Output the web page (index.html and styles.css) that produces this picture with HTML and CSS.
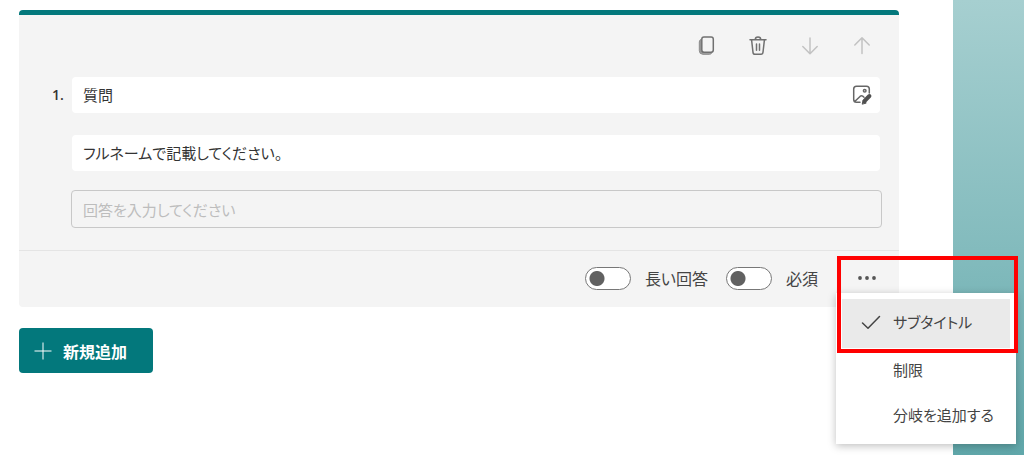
FILE: index.html
```html
<!DOCTYPE html>
<html lang="ja">

<head>
  <meta charset="utf-8">
  <meta name="viewport" content="width=device-width, initial-scale=1">
  <title>フォーム</title>
  <link rel="stylesheet" href="styles.css">
</head>

<body>

  <main class="form-page">

    <section class="question-card">

      <div class="question-body">
        <div class="toolbar">
          <button class="icon-button" type="button" aria-label="コピー">
            <svg width="22" height="22" viewBox="0 0 22 22" fill="none" stroke="#707070" stroke-width="1.5">
              <path d="M6 4.5Q4.300 5 4.300 7V15.500Q4.300 19.300 8 19.300H14.500Q16.300 19.300 17 17.500H8Q6 17.500 6 15.500Z" fill="#a0a0a0" stroke="#8a8a8a" stroke-width="1"/>
              <rect x="6.800" y="2" width="11.500" height="15.300" rx="2.200" fill="#f4f4f4"/>
            </svg>
          </button>
          <button class="icon-button" type="button" aria-label="削除">
            <svg width="22" height="22" viewBox="0 0 22 22" fill="none" stroke="#707070" stroke-width="1.500" stroke-linecap="round" stroke-linejoin="round">
              <path d="M3 4.800H19M4.600 5L6 17.300Q6.200 19.300 8 19.300H14Q15.800 19.300 16 17.300L17.400 5M8.300 4.500Q8.300 2 11 2Q13.700 2 13.700 4.500M9.500 9V15.300M12.500 9V15.300"/>
            </svg>
          </button>
          <button class="icon-button" type="button" aria-label="下へ移動" disabled>
            <svg width="22" height="22" viewBox="0 0 22 22" fill="none" stroke="#c2c2c2" stroke-width="1.500" stroke-linecap="round" stroke-linejoin="round">
              <path d="M11 3V18.500M3.800 11.500L11 18.700L18.200 11.500"/>
            </svg>
          </button>
          <button class="icon-button" type="button" aria-label="上へ移動" disabled>
            <svg width="22" height="22" viewBox="0 0 22 22" fill="none" stroke="#c2c2c2" stroke-width="1.500" stroke-linecap="round" stroke-linejoin="round">
              <path d="M11 18.500V3M3.800 10L11 2.800L18.200 10"/>
            </svg>
          </button>
        </div>

        <div class="question-row">
          <label class="question-number" for="question">1.</label>
          <div class="field">
            <input class="field-input" id="question" type="text" value="質問">
            <button class="icon-button" type="button" aria-label="メディアの挿入">
              <svg width="22" height="22" viewBox="0 0 22 22" fill="none" stroke="#666" stroke-width="1.500" stroke-linecap="round" stroke-linejoin="round">
                <path d="M9 18.300H5.500Q2.700 18.300 2.700 15.500V5Q2.700 2.200 5.500 2.200H15.500Q18.300 2.200 18.300 5V9M4 17.200L9.300 12.200Q10.500 11.200 11.700 12.200L13 13.300"/>
                <circle cx="13.700" cy="6.800" r="1.300"/>
                <path d="M18.400 12L13.500 17" stroke="#505050" stroke-width="4"/>
                <path d="M11.300 19.800L12.300 16L15 18.800Z" fill="#505050" stroke="#505050" stroke-width="1"/>
              </svg>
            </button>
          </div>
        </div>

        <div class="field">
          <input class="field-input" type="text" aria-label="サブタイトル" value="フルネームで記載してください。">
        </div>

        <input class="answer-input" type="text" aria-label="回答" placeholder="回答を入力してください" disabled>
      </div>

      <div class="question-footer">
        <label class="toggle-label"><input class="toggle" type="checkbox">長い回答</label>
        <label class="toggle-label"><input class="toggle" type="checkbox">必須</label>

        <div class="more">
          <button class="icon-button" type="button" aria-label="その他の設定" aria-expanded="true">
            <svg width="22" height="22" viewBox="0 0 22 22" fill="#555">
              <circle cx="4" cy="11" r="1.900"/>
              <circle cx="11" cy="11" r="1.900"/>
              <circle cx="18" cy="11" r="1.900"/>
            </svg>
          </button>

          <div class="menu" role="menu">
            <button class="menu-item menu-item-checked" type="button" role="menuitemcheckbox" aria-checked="true">
              <svg class="check" width="20" height="20" viewBox="0 0 20 20" fill="none" stroke="#444" stroke-width="1.500" stroke-linecap="round" stroke-linejoin="round">
                <path d="M1.500 11L7 16.300L18.500 4.500"/>
              </svg>
              サブタイトル
            </button>
            <button class="menu-item" type="button" role="menuitem">制限</button>
            <button class="menu-item" type="button" role="menuitem">分岐を追加する</button>
          </div>

          <div class="highlight-red"></div>
        </div>
      </div>

    </section>

    <button class="add-button" type="button">
      <svg width="18" height="18" viewBox="0 0 18 18" fill="none" stroke="#fff" stroke-width="1">
        <path d="M9 .5V17.500M.5 9H17.500"/>
      </svg>
      新規追加
    </button>

  </main>

</body>

</html>
```
FILE: styles.css
```css
* {
  box-sizing: border-box;
}

body {
  margin: 0;
  min-height: 100vh;
  padding-right: 71px;
  background: linear-gradient(to bottom, #a6cfd0, #81babc 58%, #60a7aa);
  color: #333;
  font-family: "Noto Sans CJK JP", sans-serif;
  font-size: 16px;
  line-height: 24px;
  /* Proportional kana */
  font-feature-settings: "palt";
}

button,
input {
  font: inherit;
  font-feature-settings: "palt";
  color: inherit;
}

button {
  border: none;
  background: none;
  cursor: pointer;
}

.form-page {
  min-height: 100vh;
  padding: 10px 54px 24px 19px;
  background: white;
}

.question-card {
  border-top: 5px solid #03787c;
  border-radius: 4px;
  background: #f4f4f4;
}

.question-body {
  display: flex;
  flex-direction: column;
  gap: 22px;
  padding: 20px 19px 22px 53px;
}

.toolbar {
  display: flex;
  justify-content: flex-end;
  gap: 30px;
  padding-right: 7px;
  margin-bottom: -2px;
}

.icon-button {
  display: flex;
  padding: 0;
}

/* The number hangs in the padding beside the field. */
.question-row {
  display: flex;
  align-items: center;
  margin-left: -20px;
}

.question-number {
  width: 20px;
  font-family: "Open Sans", sans-serif;
  font-size: 14px;
  font-weight: 600;
}

.field {
  display: flex;
  flex: 1;
  align-items: center;
  padding-right: 7px;
  border-radius: 4px;
  background: white;
}

.field-input {
  flex: 1;
  min-width: 0;
  height: 36px;
  padding: 0 11px 2px;
  border: none;
  background: none;
  font-size: 15px;
}

.answer-input {
  height: 38px;
  margin: -3px -2px 0 -1px;
  padding: 0 11px;
  border: 1px solid #c8c8c8;
  border-radius: 4px;
  background: none;
  font-size: 15px;
}

.answer-input::placeholder {
  color: #bdbdbd;
}

.question-footer {
  display: flex;
  justify-content: flex-end;
  align-items: center;
  gap: 18px;
  height: 57px;
  padding: 0 21px 2px 0;
  border-top: 1px solid #e4e4e4;
}

.toggle-label {
  display: flex;
  align-items: center;
  gap: 14px;
  color: #444;
}

.toggle {
  appearance: none;
  width: 46px;
  height: 23px;
  margin: 0;
  border: 1px solid #777;
  border-radius: 12px;
  background: radial-gradient(circle at 11px 50%, #616161 7px, transparent 8px) white;
}

.more {
  position: relative;
  margin-left: 20px;
}

.menu {
  position: absolute;
  top: 26px;
  left: -20px;
  width: 180px;
  padding: 6px;
  background: white;
  box-shadow: 0 2px 8px rgba(0, 0, 0, 0.25);
}

.menu-item {
  display: flex;
  align-items: center;
  width: 100%;
  height: 45px;
  padding: 0 0 2px 51px;
  color: #444;
  font-size: 15px;
  white-space: nowrap;
}

.menu-item-checked {
  gap: 12px;
  height: 49px;
  padding: 0 0 4px 19px;
  background: #eaeaea;
}

/* Frame around the menu button and the checked item. */
.highlight-red {
  position: absolute;
  top: -11px;
  left: -19px;
  width: 181px;
  height: 97px;
  border: 4px solid red;
  pointer-events: none;
}

.add-button {
  display: flex;
  align-items: center;
  gap: 11px;
  height: 45px;
  margin-top: 21px;
  padding: 0 26px 0 15px;
  border-radius: 4px;
  background: #03787c;
  color: white;
  font-weight: bold;
}
```
